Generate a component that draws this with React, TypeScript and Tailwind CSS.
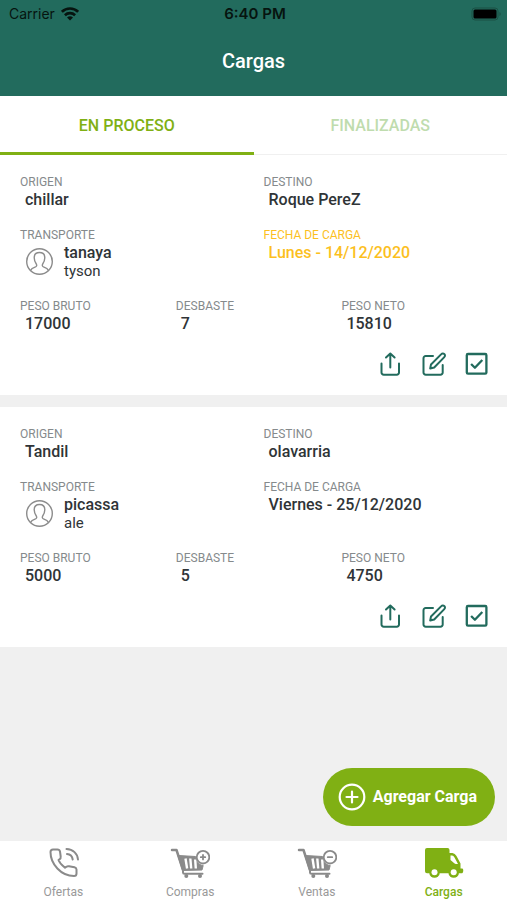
import type { ReactNode } from "react";

type Carga = {
  id: number;
  origen: string;
  destino: string;
  transporte: string;
  chofer: string;
  fecha: string;
  vencida: boolean;
  pesoBruto: number;
  desbaste: number;
  pesoNeto: number;
};

const cargas: Carga[] = [
  {
    id: 1,
    origen: "chillar",
    destino: "Roque PereZ",
    transporte: "tanaya",
    chofer: "tyson",
    fecha: "Lunes - 14/12/2020",
    vencida: true,
    pesoBruto: 17000,
    desbaste: 7,
    pesoNeto: 15810,
  },
  {
    id: 2,
    origen: "Tandil",
    destino: "olavarria",
    transporte: "picassa",
    chofer: "ale",
    fecha: "Viernes - 25/12/2020",
    vencida: false,
    pesoBruto: 5000,
    desbaste: 5,
    pesoNeto: 4750,
  },
];

function WifiIcon() {
  return (
    <svg width="18" height="14" viewBox="0 0 18 14" fill="none" stroke="#06140f" strokeWidth="2.6">
      <path d="M.9 4.800a11.500 11.500 0 0 1 16.200 0" />
      <path d="M3.900 8.200a7.300 7.300 0 0 1 10.200 0" />
      <path d="M9 13.600 6 10.600a4.300 4.300 0 0 1 6 0Z" fill="#06140f" stroke="none" />
    </svg>
  );
}

function BatteryIcon() {
  return (
    <svg width="30" height="14" viewBox="0 0 30 14">
      <rect x="1" y="1" width="26" height="12" rx="3" fill="none" stroke="#1b5145" />
      <rect x="2.500" y="2.500" width="23" height="9" rx="1.500" fill="#000" />
      <path d="M28.500 5v4q1.200-.6 1.200-2t-1.200-2Z" fill="#1b5145" />
    </svg>
  );
}

function AvatarIcon() {
  return (
    <svg width="28" height="28" viewBox="0 0 28 28" fill="none" stroke="#8c8c8c" strokeWidth="1.4">
      <circle cx="14.500" cy="13.500" r="12.800" />
      <path
        d="M5.500 22.500c1-2 2.500-2.600 4.500-3.300 1.800-.6 2-1.900 1.300-3.200C10 14 9.200 12 9.200 9.700 9.200 6.500 11.300 4.500 14.500 4.500s5.300 2 5.300 5.200c0 2.300-.8 4.300-2.100 6.300-.7 1.300-.5 2.600 1.300 3.200 2 .7 3.500 1.300 4.500 3.300"
        strokeLinecap="round"
        strokeLinejoin="round"
      />
    </svg>
  );
}

function ShareIcon() {
  return (
    <svg width="24" height="24" viewBox="0 0 24 24" fill="none" stroke="#226b5d" strokeWidth="2" strokeLinecap="round" strokeLinejoin="round">
      <path d="M2.500 11.500V20.500a2.200 2.200 0 0 0 2.200 2.200H17.800A2.200 2.200 0 0 0 20 20.500V11.500" />
      <path d="M11.300 15.500V1.500M7 5.500 11.300 1.500 15.600 5.500" />
    </svg>
  );
}

function EditIcon() {
  return (
    <svg width="24" height="24" viewBox="0 0 24 24" fill="none" stroke="#226b5d" strokeWidth="2" strokeLinecap="round" strokeLinejoin="round">
      <path d="M11 4H3.700A2.200 2.200 0 0 0 1.500 6.200V20.500a2.200 2.200 0 0 0 2.200 2.200H18.500a2.200 2.200 0 0 0 2.200-2.200V13" />
      <path d="M8.200 16.500 9 12.500 19.300 2.100a2 2 0 0 1 3 0 2 2 0 0 1 0 3L12.200 15.500Z" />
    </svg>
  );
}

function CheckIcon() {
  return (
    <svg width="24" height="24" viewBox="0 0 24 24" fill="none" stroke="#226b5d" strokeWidth="2.300" strokeLinejoin="round">
      <rect x="1.800" y="2" width="19.600" height="19.600" rx="1.200" />
      <path d="m6.100 12 3.800 3.800 7.400-7.800" />
    </svg>
  );
}

function PhoneIcon() {
  return (
    <svg width="40" height="32" viewBox="0 0 40 32" fill="none" stroke="#8a8a8a" strokeWidth="2" strokeLinecap="round" strokeLinejoin="round">
      <path d="M7.500 5Q7.500 2.500 10 2.500H14.500Q16.500 2.500 17 4.500L17.700 9.500Q18 11.500 16.500 12.300L15.500 13Q17 17 22 20.800L23.500 19.700Q24.500 19 26 19.300L31.500 20.300Q33.500 20.800 33.500 22.500V26.500Q33.500 29 31 29C18 29 7.500 17 7.500 5Z" />
      <path d="M23.500 2C30 2.300 34.500 6.500 35 12.500M24 7C27.300 7.300 29.300 9.500 29.700 12.500" />
    </svg>
  );
}

function CartIcon({ sign }: { sign: "plus" | "minus" }) {
  return (
    <svg width="40" height="32" viewBox="0 0 40 32" fill="none" stroke="#8a8a8a" strokeLinecap="round" strokeLinejoin="round">
      <path d="M2 3H6.500L13 23" strokeWidth="2.500" />
      <path d="M8.300 8.500 25.500 9.500C26 14.500 29 18 33.200 18.500L32 23 13 23.500Z" fill="#8a8a8a" strokeWidth="1" />
      <path d="m15.500 11.500 1.600 10M20.300 11.500l.9 10M25.200 12.500l.6 9" stroke="#fff" strokeWidth="2.400" strokeLinecap="butt" />
      <path d="M13 23v2.500q0 1.300 1.500 1.300H32.500" strokeWidth="2" />
      <circle cx="16.300" cy="29" r="2" fill="#8a8a8a" stroke="none" />
      <circle cx="30" cy="29" r="2" fill="#8a8a8a" stroke="none" />
      <circle cx="33" cy="10.200" r="6.300" fill="#fff" strokeWidth="1.800" />
      <path d={sign === "plus" ? "M30.800 10.200h4.400M33 8v4.400" : "M30.800 10.200h4.400"} strokeWidth="1.800" />
    </svg>
  );
}

function TruckIcon() {
  return (
    <svg width="40" height="32" viewBox="0 0 40 32" fill="#80b014">
      <path d="M3 1H23.500Q25.500 1 25.500 3V6H28.500Q31 6.300 32.500 9L36.500 16.500V21.500H38.200Q39.300 21.500 39.300 23.500T38.200 26.300H3Q1 26.300 1 24.300V3Q1 1 3 1Z" />
      <path d="M26.500 8.500H28Q29.500 8.700 30.500 10.500L34 17H32Q31 17 30 16L26.500 13Z" fill="#fff" />
      <circle cx="10.500" cy="25.500" r="5.300" />
      <circle cx="10.500" cy="25.300" r="3" fill="#fff" />
      <circle cx="29.700" cy="25.500" r="5.300" />
      <circle cx="29.700" cy="25.300" r="3" fill="#fff" />
    </svg>
  );
}

function Campo({ label, warn, children }: { label: string; warn?: boolean; children: ReactNode }) {
  return (
    <div className={warn ? "text-[#fcbf1e]" : "text-[#2f3437]"}>
      <dt className={`text-xs leading-[18px] ${warn ? "" : "text-[#858a8c]"}`}>{label}</dt>
      <dd className="pl-[5px] text-base leading-[18px] font-medium">{children}</dd>
    </div>
  );
}

function CargaCard({ carga }: { carga: Carga }) {
  return (
    <article className="bg-white pt-[18px] pb-[19px] pl-5">
      <dl className="grid grid-cols-2 gap-y-[17px]">
        <Campo label="ORIGEN">{carga.origen}</Campo>
        <Campo label="DESTINO">{carga.destino}</Campo>
        <Campo label="TRANSPORTE">
          <div className="flex items-center gap-[11px]">
            <AvatarIcon />
            <div>
              <p>{carga.transporte}</p>
              <p className="text-[15px] font-normal">{carga.chofer}</p>
            </div>
          </div>
        </Campo>
        <Campo label="FECHA DE CARGA" warn={carga.vencida}>{carga.fecha}</Campo>
      </dl>
      <dl className="mt-[17px] grid grid-cols-[32fr_34fr_34fr]">
        <Campo label="PESO BRUTO">{carga.pesoBruto}</Campo>
        <Campo label="DESBASTE">{carga.desbaste}</Campo>
        <Campo label="PESO NETO">{carga.pesoNeto}</Campo>
      </dl>
      <div className="mt-[19px] flex justify-end gap-[19px] pr-[18px]">
        <button type="button" aria-label="Compartir"><ShareIcon /></button>
        <button type="button" aria-label="Editar"><EditIcon /></button>
        <button type="button" aria-label="Finalizar"><CheckIcon /></button>
      </div>
    </article>
  );
}

function NavItem({ label, icon, active }: { label: string; icon: ReactNode; active?: boolean }) {
  return (
    <a
      href="#"
      aria-current={active ? "page" : undefined}
      className={`flex flex-1 flex-col items-center gap-[5px] pt-1.5 text-xs leading-4 ${active ? "font-medium text-[#80b014]" : "text-[#999]"}`}
    >
      {icon}
      {label}
    </a>
  );
}

export default function App() {
  return (
    <div className="flex min-h-screen flex-col bg-[#f0f0f0] font-['Roboto',sans-serif]">
      <header className="bg-[#226b5d]">
        <div className="grid h-7 grid-cols-3 items-center pr-1.5 pl-[9px] font-['Inter',sans-serif] text-sm text-[#06140f]">
          <div className="flex items-center gap-1.5">
            Carrier
            <WifiIcon />
          </div>
          <div className="text-center text-[15px] font-semibold">6:40 PM</div>
          <div className="flex justify-end">
            <BatteryIcon />
          </div>
        </div>
        <h1 className="pt-[19px] pb-[21px] text-center text-xl leading-7 font-medium text-white">Cargas</h1>
      </header>

      <div role="tablist" className="flex bg-white text-base font-medium">
        <button type="button" role="tab" aria-selected="true" className="h-[59px] flex-1 border-b-[3px] border-[#80b014] pt-1 text-[#80b014]">
          EN PROCESO
        </button>
        <button type="button" role="tab" aria-selected="false" className="h-[59px] flex-1 border-b border-[#f0f0f0] pt-0.5 text-[#bfdcae]">
          FINALIZADAS
        </button>
      </div>

      <main className="flex flex-1 flex-col gap-3">
        {cargas.map((carga) => (
          <CargaCard key={carga.id} carga={carga} />
        ))}
      </main>

      <footer className="sticky bottom-0">
        <button
          type="button"
          className="absolute right-3 bottom-full mb-[15px] flex h-[58px] items-center gap-[7px] rounded-full bg-[#80b014] pr-[18px] pl-[15px] text-base font-bold text-white"
        >
          <svg width="28" height="28" viewBox="0 0 28 28" fill="none" stroke="#fff" strokeWidth="2.200" strokeLinecap="round">
            <circle cx="14" cy="14" r="12.300" />
            <path d="M8.500 14h11M14 8.500v11" />
          </svg>
          Agregar Carga
        </button>
        <nav className="flex bg-white">
          <NavItem label="Ofertas" icon={<PhoneIcon />} />
          <NavItem label="Compras" icon={<CartIcon sign="plus" />} />
          <NavItem label="Ventas" icon={<CartIcon sign="minus" />} />
          <NavItem label="Cargas" icon={<TruckIcon />} active />
        </nav>
      </footer>
    </div>
  );
}
